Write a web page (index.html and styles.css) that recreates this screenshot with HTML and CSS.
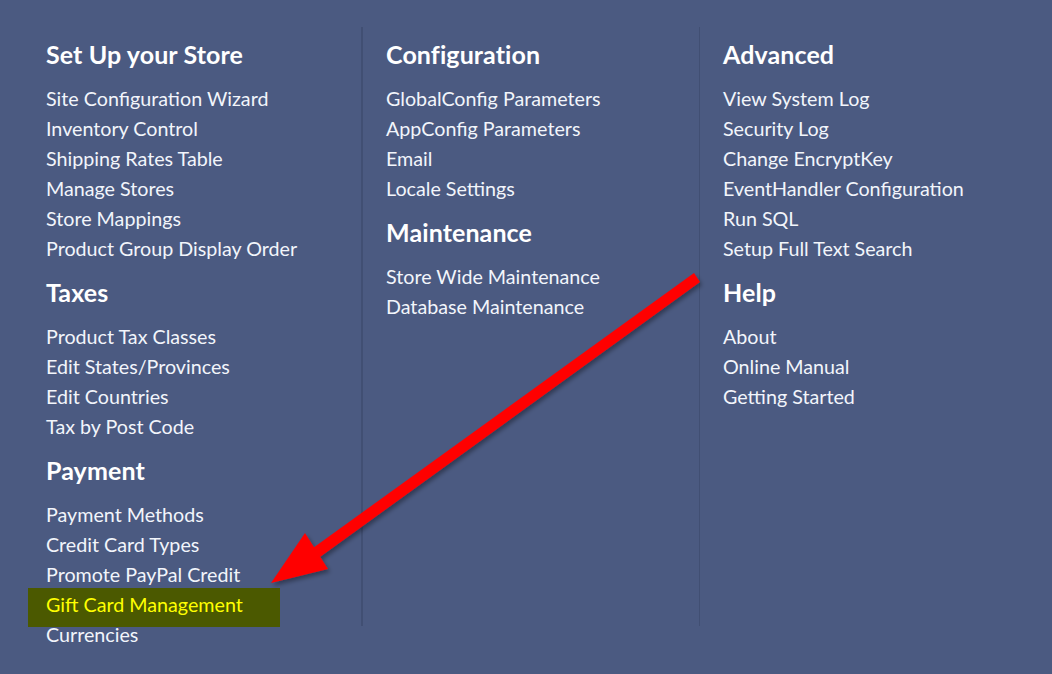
FILE: index.html
```html
<!DOCTYPE html>
<html>
<head>
<meta charset="utf-8">
<link rel="stylesheet" href="styles.css">
</head>
<body>
<div class="menu">
  <div class="col">
    <h2>Set Up your Store</h2>
    <ul>
      <li>Site Configuration Wizard</li>
      <li>Inventory Control</li>
      <li>Shipping Rates Table</li>
      <li>Manage Stores</li>
      <li>Store Mappings</li>
      <li>Product Group Display Order</li>
    </ul>
    <h2>Taxes</h2>
    <ul>
      <li>Product Tax Classes</li>
      <li>Edit States/Provinces</li>
      <li>Edit Countries</li>
      <li>Tax by Post Code</li>
    </ul>
    <h2>Payment</h2>
    <ul>
      <li>Payment Methods</li>
      <li>Credit Card Types</li>
      <li>Promote PayPal Credit</li>
      <li class="hl">Gift Card Management</li>
      <li>Currencies</li>
    </ul>
  </div>
  <div class="col">
    <h2>Configuration</h2>
    <ul>
      <li>GlobalConfig Parameters</li>
      <li>AppConfig Parameters</li>
      <li>Email</li>
      <li>Locale Settings</li>
    </ul>
    <h2>Maintenance</h2>
    <ul>
      <li>Store Wide Maintenance</li>
      <li>Database Maintenance</li>
    </ul>
  </div>
  <div class="col">
    <h2>Advanced</h2>
    <ul>
      <li>View System Log</li>
      <li>Security Log</li>
      <li>Change EncryptKey</li>
      <li>EventHandler Configuration</li>
      <li>Run SQL</li>
      <li>Setup Full Text Search</li>
    </ul>
    <h2>Help</h2>
    <ul>
      <li>About</li>
      <li>Online Manual</li>
      <li>Getting Started</li>
    </ul>
  </div>
</div>
<svg class="arrow" width="1052" height="674" viewBox="0 0 1052 674">
  <defs>
    <filter id="sh" x="-10%" y="-10%" width="130%" height="130%">
      <feDropShadow dx="2" dy="3" stdDeviation="2" flood-color="#000" flood-opacity="0.35"/>
    </filter>
  </defs>
  <g filter="url(#sh)" fill="#ff0000" stroke="none">
    <polygon points="694,273 700,282 320,557 313,548"/>
    <polygon points="271,583 305,533 328,569"/>
  </g>
</svg>
</body>
</html>
```
FILE: styles.css
```css
html, body {
  margin: 0;
  padding: 0;
}
body {
  background: #4b5a81;
  width: 1052px;
  height: 674px;
  overflow: hidden;
  position: relative;
  font-family: "Lato", "Open Sans", sans-serif;
  color: #ffffff;
}
.menu {
  display: grid;
  grid-template-columns: 333px 338px 352px;
  grid-template-rows: 599px;
  padding: 27px 0 0 28px;
}
.col {
  padding-left: 18px;
}
.col + .col {
  border-left: 1px solid #414f73;
  padding-left: 23px;
}
.col:nth-child(2) {
  border-left-width: 2px;
}
h2 {
  margin: 12px 0 0 0;
  font-size: 25px;
  line-height: 30px;
  font-weight: 700;
  letter-spacing: 0.1px;
  color: #ffffff;
}
h2 + ul {
  margin-top: 15px;
}
ul {
  list-style: none;
  padding: 0;
  margin: 0 0 13px 0;
}
li {
  font-size: 19.7px;
  line-height: 30px;
  color: #f2f5fb;
  white-space: nowrap;
}
.hl {
  background: #4b5900;
  color: #ffff00;
  margin: -2px 0 -7px -18px;
  padding: 2px 0 7px 18px;
  width: 234px;
}
.arrow {
  position: absolute;
  left: 0;
  top: 0;
  pointer-events: none;
}
```
